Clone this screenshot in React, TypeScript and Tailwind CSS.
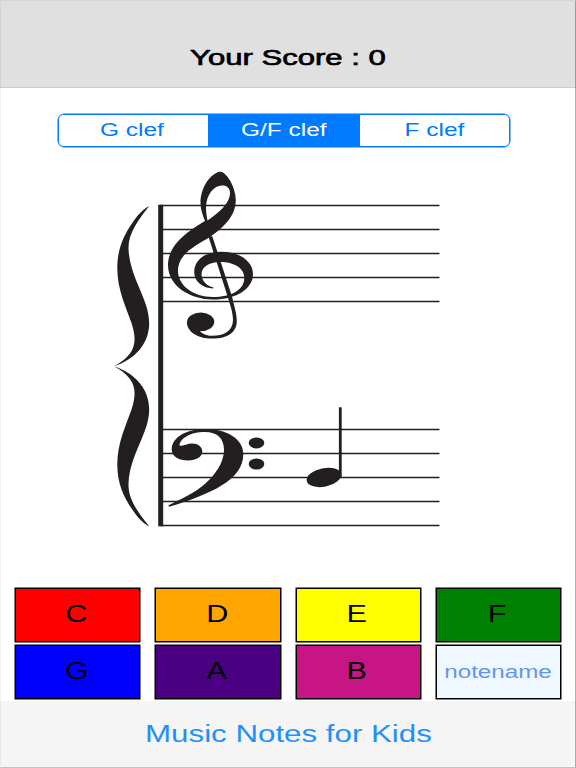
const clefs = ['G clef', 'G/F clef', 'F clef'];

const answers = [
  { label: 'C', color: 'bg-[#ff0000]' },
  { label: 'D', color: 'bg-[#ffa500]' },
  { label: 'E', color: 'bg-[#ffff00]' },
  { label: 'F', color: 'bg-[#008000]' },
  { label: 'G', color: 'bg-[#0000ff]' },
  { label: 'A', color: 'bg-[#4b0082]' },
  { label: 'B', color: 'bg-[#c71585]' },
];

const staffLines = [205.5, 229.5, 253.5, 277.5, 301.5, 429.5, 453.5, 477.5, 501.5, 525.5];

const bracePath =
  'M149.3 206C142 210 137 216 133 222C123 236 117.3 250 117.3 268C117.3 290 126 307 131.5 323C138 343 135 355 114 366.3C136 359 149.2 343 149.2 323C149.2 299 130 279 128.5 249C128 233 139 219 149.3 206Z';

function GrandStaff() {
  return (
    <svg viewBox="0 160 576 380" className="block h-[380px] w-[576px] shrink-0" fill="#231f20" aria-label="Grand staff">
      {staffLines.map((y) => (
        <line key={y} x1="160" x2="439.5" y1={y} y2={y} stroke="#231f20" strokeWidth="1.7" />
      ))}
      <rect x="158.2" y="204.8" width="5" height="321.5" />
      <path d={bracePath} />
      <path d={bracePath} transform="matrix(1 0 0 -1 0 732.6)" />

      {/* treble clef */}
      <path
        fillRule="evenodd"
        d="M220 171.8C211 173 200.5 187 200.5 203C200.5 210 203 216 205 221C192 229 168 243 168 265C168 286 190 299.5 213 299.5C236 299.5 253 289 253 274C253 261 239 251.7 221.5 251.7C205 251.7 194.2 260 194.2 272C194.2 282 203 288 213 288.6L213.5 287.6C207 286 201.5 281 201.5 274C201.5 267 209 262 220 262C234 262 244.3 268 244.3 278C244.3 290 231 297 213 297C193 297 178 285 178 271C178 254 195 246 210 237C224 227 235.8 216 235.8 200C235.8 187 226 171 220 171.8ZM207.5 220.5C205.8 212 205 203 208.5 196C211.5 189.5 217 185.5 222 185.5C227 185.5 230 188 230 193C230 204 217 214 207.5 220.5Z"
      />
      <path d="M208.6 237L212.2 236L232.2 297C234 306 236.8 313 236.8 321C236.8 332 228 338.6 212 338.6C198 338.6 187 332 186.8 322L200 331C202 334 207 335.8 212 335.8C224 335.8 233 331 233 320C233 312 229.8 304 227.8 297Z" />
      <ellipse cx="200.7" cy="321.8" rx="13.6" ry="9.3" />

      {/* bass clef */}
      <path d="M168.3 505.5C187 496 200 490 209 480C219 470 224 459 224 450C224 438 217 432 205 432C191 432 180 438 179.5 445.5C184 446.5 187 443.6 192 443.6C198 443.6 202.3 447 202.3 451.5C202.3 457 196 460.5 188.5 460.5C178 460.5 171.7 456 171.7 449.5C171.7 437 187 429 205 429C227 429 243.3 439 243.3 454C243.3 480 211 494 169 506.8Z" />
      <ellipse cx="256.5" cy="442.9" rx="7.8" ry="5.5" />
      <ellipse cx="256.5" cy="464" rx="7.8" ry="5.5" />

      {/* quarter note */}
      <ellipse cx="324" cy="477.4" rx="17.6" ry="9.2" transform="rotate(-12 324 477.4)" />
      <rect x="338.9" y="407.3" width="2.8" height="70" />
    </svg>
  );
}

export default function App() {
  return (
    <div className="relative flex h-[768px] w-[576px] flex-col bg-white font-['Liberation_Sans',Arial,sans-serif]">
      <header className="flex h-[88px] shrink-0 justify-center border-b border-[#cccccc] bg-[#e0e0e0] pt-[44px]">
        <h1 className="scale-x-[1.38] text-[22.5px] leading-7 text-black [-webkit-text-stroke:0.7px_black]">
          Your Score : 0
        </h1>
      </header>

      <div className="mt-[26px] mb-[13px] ml-[58px] flex h-[33px] w-[452px] shrink-0 overflow-hidden rounded-md border border-[#007aff] shadow-[0_0_0_0.5px_#007aff]">
        {clefs.map((clef, i) => (
          <button
            key={clef}
            className={
              i === 1
                ? 'flex w-[152px] justify-center bg-[#007aff] text-white'
                : 'flex w-[149px] justify-center bg-white text-[#007aff] first:pr-[3px]'
            }
          >
            <span className="scale-x-[1.39] text-[17.6px] leading-[30px]">{clef}</span>
          </button>
        ))}
      </div>

      <GrandStaff />

      <div className="mt-[48px] grid shrink-0 grid-cols-4 gap-x-[15px] gap-y-[3px] pr-[15px] pl-[15px]">
        {answers.map(({ label, color }) => (
          <button
            key={label}
            className={`flex h-[54px] items-center justify-center border border-black pr-[2px] pb-[3px] text-black shadow-[0_0_0_0.5px_#000] ${color}`}
          >
            <span className="scale-x-[1.33] text-[23px] leading-7">{label}</span>
          </button>
        ))}
        <div className="flex h-[54px] items-center justify-center border border-black bg-[#f0f8ff] text-[#6495ed] shadow-[0_0_0_0.5px_#000]">
          <span className="scale-x-[1.28] text-[18.9px] leading-6">notename</span>
        </div>
      </div>

      <footer className="mt-[2px] flex flex-1 items-center justify-center bg-[#f5f5f5] pb-[2px] pl-[1px]">
        <span className="scale-x-[1.36] text-[23px] leading-7 text-[#1e90ff]">Music Notes for Kids</span>
      </footer>

      {/* thin frame over the whole screen */}
      <div className="pointer-events-none absolute inset-0 border border-t-black/5 border-r-black/30 border-b-black/20 border-l-black/5" />
    </div>
  );
}
